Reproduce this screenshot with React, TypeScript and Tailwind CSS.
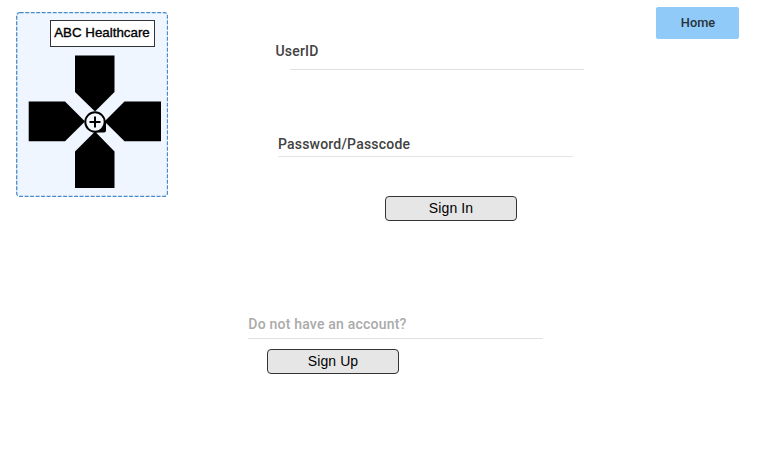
import React from 'react';

function Logo() {
  return (
    <section className="relative mt-3 ml-4 flex h-[185px] w-[152px] flex-col items-start">
      <svg className="absolute inset-0" width="152" height="185" viewBox="0 0 152 185">
        <rect x="0.5" y="0.5" width="151" height="184" rx="3" fill="#eff6ff" />
        <rect x="0.7" y="0.7" width="150.800" height="183.600" rx="3" fill="none" stroke="#4a8cc9" strokeWidth="1.300" strokeDasharray="4 1.500" />
      </svg>
      <h1 className="relative mt-2 ml-[34px] flex h-[27px] w-[105px] items-center justify-center border border-[#333] bg-white pr-px pb-px font-['Liberation_Sans',sans-serif] text-[13.33px] font-normal whitespace-nowrap text-black [-webkit-text-stroke:0.35px_black]">
        ABC Healthcare
      </h1>
      <svg className="relative mt-2 ml-3" width="134" height="134" viewBox="0 0 134 134">
        <path d="M47 .5h39.5V37L67 56.5 47 37ZM.7 46.5H37L57 66.5 37 86.3H.7ZM133 46.5H96.500L76.500 66.500l20 19.800H133ZM47 133h39.500V96.500L67 76.500 47 96.500Z" fill="#000" />
        <path d="M67 67h11v8.500q0 2-2 2h-9Z" fill="#000" />
        <circle cx="67" cy="67" r="9.700" fill="#f5f9ff" stroke="#000" strokeWidth="2" />
        <path d="M67 61.500v11M61.500 67h11" stroke="#000" strokeWidth="2" />
      </svg>
    </section>
  );
}

function ActionButton({ children, className }: { children: React.ReactNode; className: string }) {
  return (
    <button className={`flex h-[25px] w-[132px] items-center justify-center rounded-[4px] border border-[#333] bg-[#e6e6e6] pb-0.5 font-['Liberation_Sans',sans-serif] text-[14px] font-normal tracking-[0.1px] text-black ${className}`}>
      {children}
    </button>
  );
}

export default function App() {
  return (
    <main className="flex h-[452px] w-[769px] overflow-hidden bg-white font-['Roboto',sans-serif]">
      <Logo />
      <form className="ml-20 flex w-[336px] flex-col items-start text-sm leading-4 font-medium text-[#424242]">
        <label className="mt-[43px] ml-[27.5px] tracking-[0.2px]">UserID</label>
        <div className="mt-[10px] ml-[42px] h-px w-[294px] bg-[#e0e0e0]" />
        <label className="mt-[66px] ml-[30px] tracking-[0.2px]">Password/Passcode</label>
        <div className="mt-1 ml-[30px] h-px w-[295px] bg-[#e4e4e4]" />
        <ActionButton className="mt-[39px] ml-[137px]">Sign In</ActionButton>
        <p className="mt-[95px] ml-[0.3px] tracking-[0.21px] text-[#aaa]">Do not have an account?</p>
        <div className="mt-[6px] h-px w-[295px] bg-[#e0e0e0]" />
        <ActionButton className="mt-[10px] ml-[19px]">Sign Up</ActionButton>
      </form>
      <button className="mt-[7px] ml-[72px] flex h-8 w-[83px] items-center justify-center rounded-[2px] bg-[#90caf9] pl-px text-[12.8px] font-medium text-[#263238]">
        Home
      </button>
    </main>
  );
}
